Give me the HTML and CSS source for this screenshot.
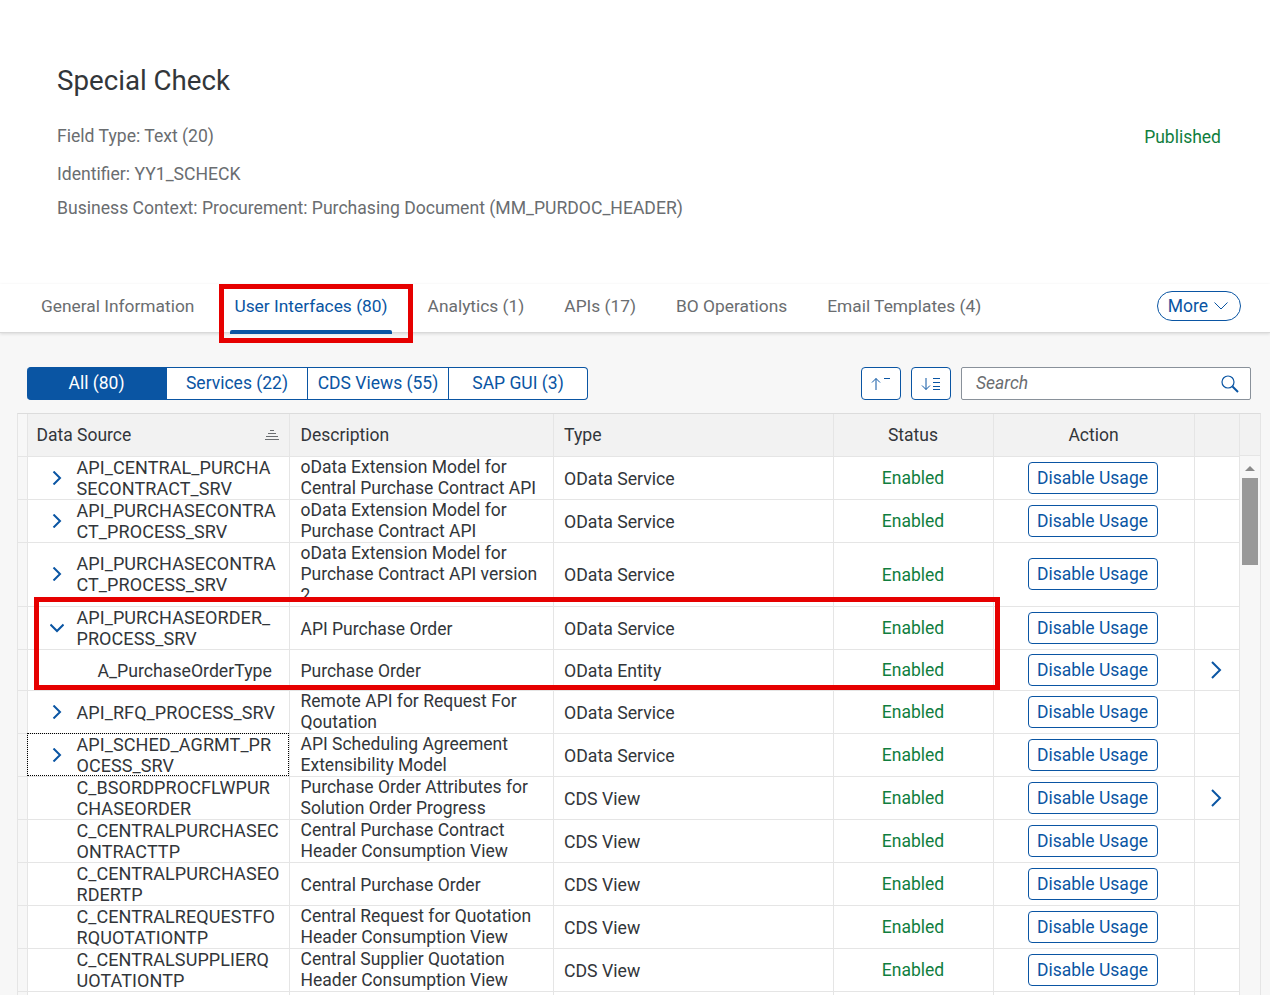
FILE: index.html
```html
<!DOCTYPE html>
<html lang="en">
<head>
    <meta charset="UTF-8">
    <title>Special Check</title>
    <link rel="stylesheet" href="styles.css">
</head>
<body>
    <header class="header">
        <h1>Special Check</h1>
        <div class="header-info">
            <div>
                <p class="meta meta-first">Field Type: Text (20)</p>
                <p class="meta">Identifier: YY1_SCHECK</p>
                <p class="meta">Business Context: Procurement: Purchasing Document (MM_PURDOC_HEADER)</p>
            </div>
            <span class="published">Published</span>
        </div>
    </header>

    <nav class="tabs">
        <a class="tab">General Information</a>
        <a class="tab tab-active">User Interfaces (80)</a>
        <a class="tab">Analytics (1)</a>
        <a class="tab">APIs (17)</a>
        <a class="tab">BO Operations</a>
        <a class="tab">Email Templates (4)</a>
        <button class="more">More
            <svg width="14" height="8" viewBox="0 0 14 8"><path d="M.5.5 7 7 13.500.5" fill="none" stroke="#0a55a3"/></svg>
        </button>
    </nav>

    <main class="content">
        <div class="toolbar">
            <div class="segments">
                <button class="segment segment-on seg-all">All (80)</button>
                <button class="segment seg-services">Services (22)</button>
                <button class="segment seg-cds">CDS Views (55)</button>
                <button class="segment seg-gui">SAP GUI (3)</button>
            </div>
            <div class="tools">
                <button class="tool">
                    <svg width="20" height="14" viewBox="0 0 20 14"><path d="M5 13V1.500M1 5.500l4-4 4 4M13 1.500h6" fill="none" stroke="#0a55a3"/></svg>
                </button>
                <button class="tool">
                    <svg width="20" height="14" viewBox="0 0 20 14"><path d="M5 1v11.500M1 8.500l4 4 4-4M12 1.500h7M12 5.500h7M12 9.500h7M12 12.500h7" fill="none" stroke="#0a55a3"/></svg>
                </button>
                <div class="search">
                    <span class="search-text">Search</span>
                    <svg width="20" height="20" viewBox="0 0 20 20"><circle cx="8" cy="8" r="6" fill="none" stroke="#0a55a3" stroke-width="1.200"/><path d="m12.500 12.500 5.500 5.500" stroke="#0a55a3" stroke-width="2"/></svg>
                </div>
            </div>
        </div>

        <div class="table-wrap">
            <table class="grid">
                <colgroup>
                    <col class="c-sel"><col class="c-source"><col class="c-desc"><col class="c-type">
                    <col class="c-status"><col class="c-action"><col class="c-nav">
                </colgroup>
                <thead>
                    <tr>
                        <th></th>
                        <th class="source-head">Data Source
                            <svg class="sort" width="14" height="10" viewBox="0 0 14 10"><path d="M5 .5h4M3 3.500h8M1 6.500h12M0 9.500h14" stroke="#6a6d70" fill="none"/></svg>
                        </th>
                        <th>Description</th>
                        <th class="type">Type</th>
                        <th class="center">Status</th>
                        <th class="center">Action</th>
                        <th></th>
                    </tr>
                </thead>
                <tbody>
                    <tr>
                        <td></td>
                        <td class="cell-source"><div class="source"><svg class="arrow" width="10" height="14" viewBox="0 0 10 14"><path d="m1.500.5 6.500 6.500-6.500 6.500" /></svg><span>API_CENTRAL_PURCHA<br>SECONTRACT_SRV</span></div></td>
                        <td>oData Extension Model for<br>Central Purchase Contract API</td>
                        <td class="type">OData Service</td>
                        <td class="center enabled">Enabled</td>
                        <td class="center cell-action"><button class="action">Disable Usage</button></td>
                        <td></td>
                    </tr>
                    <tr>
                        <td></td>
                        <td class="cell-source"><div class="source"><svg class="arrow" width="10" height="14" viewBox="0 0 10 14"><path d="m1.500.5 6.500 6.500-6.500 6.500" /></svg><span>API_PURCHASECONTRA<br>CT_PROCESS_SRV</span></div></td>
                        <td>oData Extension Model for<br>Purchase Contract API</td>
                        <td class="type">OData Service</td>
                        <td class="center enabled">Enabled</td>
                        <td class="center cell-action"><button class="action">Disable Usage</button></td>
                        <td></td>
                    </tr>
                    <tr class="row-tall">
                        <td></td>
                        <td class="cell-source"><div class="source"><svg class="arrow" width="10" height="14" viewBox="0 0 10 14"><path d="m1.500.5 6.500 6.500-6.500 6.500" /></svg><span>API_PURCHASECONTRA<br>CT_PROCESS_SRV</span></div></td>
                        <td>oData Extension Model for<br>Purchase Contract API version<br>2</td>
                        <td class="type">OData Service</td>
                        <td class="center enabled">Enabled</td>
                        <td class="center cell-action"><button class="action">Disable Usage</button></td>
                        <td></td>
                    </tr>
                    <tr>
                        <td></td>
                        <td class="cell-source"><div class="source source-open"><svg class="arrow" width="14" height="10" viewBox="0 0 14 10"><path d="m.5 1.500 6.500 6.500 6.500-6.500" /></svg><span>API_PURCHASEORDER_<br>PROCESS_SRV</span></div></td>
                        <td class="single">API Purchase Order</td>
                        <td class="type">OData Service</td>
                        <td class="center enabled">Enabled</td>
                        <td class="center cell-action"><button class="action">Disable Usage</button></td>
                        <td></td>
                    </tr>
                    <tr class="row-child">
                        <td></td>
                        <td class="cell-source single"><div class="source source-child"><span>A_PurchaseOrderType</span></div></td>
                        <td class="single">Purchase Order</td>
                        <td class="type">OData Entity</td>
                        <td class="center enabled">Enabled</td>
                        <td class="center cell-action"><button class="action">Disable Usage</button></td>
                        <td class="center"><svg class="arrow nav" width="12" height="18" viewBox="0 0 12 18"><path d="m2 1 8 8-8 8" /></svg></td>
                    </tr>
                    <tr>
                        <td></td>
                        <td class="cell-source"><div class="source"><svg class="arrow" width="10" height="14" viewBox="0 0 10 14"><path d="m1.500.5 6.500 6.500-6.500 6.500" /></svg><span class="single-text">API_RFQ_PROCESS_SRV</span></div></td>
                        <td>Remote API for Request For<br>Qoutation</td>
                        <td class="type">OData Service</td>
                        <td class="center enabled">Enabled</td>
                        <td class="center cell-action"><button class="action">Disable Usage</button></td>
                        <td></td>
                    </tr>
                    <tr>
                        <td></td>
                        <td class="cell-source focused"><div class="source"><svg class="arrow" width="10" height="14" viewBox="0 0 10 14"><path d="m1.500.5 6.500 6.500-6.500 6.500" /></svg><span>API_SCHED_AGRMT_PR<br>OCESS_SRV</span></div></td>
                        <td>API Scheduling Agreement<br>Extensibility Model</td>
                        <td class="type">OData Service</td>
                        <td class="center enabled">Enabled</td>
                        <td class="center cell-action"><button class="action">Disable Usage</button></td>
                        <td></td>
                    </tr>
                    <tr>
                        <td></td>
                        <td class="cell-source"><div class="source source-plain"><span>C_BSORDPROCFLWPUR<br>CHASEORDER</span></div></td>
                        <td>Purchase Order Attributes for<br>Solution Order Progress</td>
                        <td class="type">CDS View</td>
                        <td class="center enabled">Enabled</td>
                        <td class="center cell-action"><button class="action">Disable Usage</button></td>
                        <td class="center"><svg class="arrow nav" width="12" height="18" viewBox="0 0 12 18"><path d="m2 1 8 8-8 8" /></svg></td>
                    </tr>
                    <tr>
                        <td></td>
                        <td class="cell-source"><div class="source source-plain"><span>C_CENTRALPURCHASEC<br>ONTRACTTP</span></div></td>
                        <td>Central Purchase Contract<br>Header Consumption View</td>
                        <td class="type">CDS View</td>
                        <td class="center enabled">Enabled</td>
                        <td class="center cell-action"><button class="action">Disable Usage</button></td>
                        <td></td>
                    </tr>
                    <tr>
                        <td></td>
                        <td class="cell-source"><div class="source source-plain"><span>C_CENTRALPURCHASEO<br>RDERTP</span></div></td>
                        <td class="single">Central Purchase Order</td>
                        <td class="type">CDS View</td>
                        <td class="center enabled">Enabled</td>
                        <td class="center cell-action"><button class="action">Disable Usage</button></td>
                        <td></td>
                    </tr>
                    <tr>
                        <td></td>
                        <td class="cell-source"><div class="source source-plain"><span>C_CENTRALREQUESTFO<br>RQUOTATIONTP</span></div></td>
                        <td>Central Request for Quotation<br>Header Consumption View</td>
                        <td class="type">CDS View</td>
                        <td class="center enabled">Enabled</td>
                        <td class="center cell-action"><button class="action">Disable Usage</button></td>
                        <td></td>
                    </tr>
                    <tr>
                        <td></td>
                        <td class="cell-source"><div class="source source-plain"><span>C_CENTRALSUPPLIERQ<br>UOTATIONTP</span></div></td>
                        <td>Central Supplier Quotation<br>Header Consumption View</td>
                        <td class="type">CDS View</td>
                        <td class="center enabled">Enabled</td>
                        <td class="center cell-action"><button class="action">Disable Usage</button></td>
                        <td></td>
                    </tr>
                    <tr>
                        <td></td><td></td><td></td><td></td><td></td><td></td><td></td>
                    </tr>
                </tbody>
            </table>
            <div class="scroll-col">
                <div class="scroll-head"></div>
                <div class="scroll-track">
                    <div class="scroll-up"></div>
                    <div class="scroll-thumb"></div>
                </div>
            </div>
        </div>
    </main>

    <!-- red callouts drawn on top of the screenshot -->
    <div class="callout callout-tab"></div>
    <div class="callout callout-rows"></div>
</body>
</html>
```

FILE: styles.css
```css
* { box-sizing: border-box; }
html, body { height: 995px; overflow: hidden; }
body { margin: 0; font-family: Roboto, "Noto Sans", sans-serif; font-size: 17.5px; color: #32363a; background-color: #fff; position: relative; }
button { font-family: inherit; cursor: pointer; background-color: #fff; color: #0a55a3; }

.header { height: 284px; padding: 63px 49px 0 57px; }
h1 { margin: 0; font-size: 27.7px; line-height: 36px; font-weight: 400; color: #32363a; }
.header-info { display: flex; justify-content: space-between; align-items: flex-start; }
.meta { margin: 0 0 12px; line-height: 22px; font-size: 17.6px; color: #6a6d70; }
.meta-first { margin-top: 26px; margin-bottom: 16px; }
.published { margin-top: 28px; color: #107e3e; }

.tabs { height: 49px; display: flex; align-items: flex-start; gap: 40px; padding: 0 29px 0 41px; border-bottom: 1px solid #d9d9d9; box-shadow: 0 1px 3px rgba(0,0,0,0.12); position: relative; }
.tab { padding-top: 10px; height: 49px; line-height: 24px; font-size: 17.35px; color: #6a6d70; position: relative; }
.tab-active { color: #0a55a3; }
.tab-active::after { content: ""; position: absolute; left: -4px; right: -4px; bottom: -1px; height: 4px; border-radius: 2px 2px 0 0; background-color: #0a55a3; }
.more { margin-left: auto; margin-top: 7px; height: 30px; width: 84px; padding: 0 2px 0 0; border: 1px solid #0a55a3; border-radius: 15px; font-size: 17.5px; display: flex; align-items: center; justify-content: center; gap: 6px; }

.content { height: 662px; background-color: #f7f7f7; padding: 34px 9px 0 17px; }
.toolbar { display: flex; justify-content: space-between; height: 33px; padding: 0 10px; }
.segments { display: flex; }
.segment { height: 33px; padding: 0 0 2px; border: 1px solid #0a55a3; border-left: 0; font-size: 17.5px; }
.seg-all { width: 140px; border-radius: 4px 0 0 4px; }
.seg-services { width: 141px; }
.seg-cds { width: 141px; }
.seg-gui { width: 139px; border-radius: 0 4px 4px 0; }
.segment-on { background-color: #0a55a3; color: #fff; }
.tools { display: flex; gap: 10px; }
.tool { width: 40px; height: 33px; padding: 0; border: 1px solid #0a55a3; border-radius: 4px; display: flex; align-items: center; justify-content: center; }
.search { width: 290px; height: 33px; padding: 0 10px 0 14px; background-color: #fff; border: 1px solid #89919a; border-radius: 2px; display: flex; align-items: center; justify-content: space-between; }
.search-text { font-style: italic; color: #6a6d70; margin-bottom: 2px; }

.table-wrap { display: flex; align-items: flex-start; margin-top: 13px; border-top: 1px solid #dcdcdc; border-right: 1px solid #e5e5e5; border-left: 1px solid #e5e5e5; }
.grid { width: 1221px; table-layout: fixed; border-collapse: collapse; background-color: #fff; }
.c-sel { width: 9px; }
.c-source { width: 262px; }
.c-desc { width: 264px; }
.c-type { width: 280px; }
.c-status { width: 160px; }
.c-action { width: 201px; }
.c-nav { width: 45px; }
.grid th { height: 42px; padding: 1px 10px 0 11px; font-weight: 400; text-align: left; background-color: #f2f2f2; border: 1px solid #e5e5e5; border-top: 0; }
.grid td { height: 43px; padding: 0 0 0 11px; line-height: 21px; border: 1px solid #e5e5e5; overflow: hidden; }
.grid td:first-child, .grid th:first-child { background-color: #f7f7f7; padding: 0; border-left: 0; }
.grid .center { padding: 0; text-align: center; }
.grid td.enabled { padding-top: 2px; }
.grid td.cell-action { padding: 0 2px 0 0; }
.grid td.single { padding-top: 3px; }
.grid .type { padding-left: 10.5px; font-size: 17.7px; }
.grid td.type { padding-top: 3px; }
.grid .row-tall td { height: 64px; }
.grid .row-child td { height: 41px; }
.grid .source-head { padding-left: 9px; position: relative; }
.sort { position: absolute; right: 10px; top: 16px; }
.grid .cell-source { padding-left: 9px; font-size: 18px; letter-spacing: 0.08px; }
.source { display: flex; align-items: center; gap: 15px; padding-left: 15px; }
.source-open { gap: 13px; padding-left: 13px; }
.source-plain { padding-left: 40px; }
.source-child { padding-left: 61px; font-size: 17.7px; letter-spacing: 0; }
.single-text { padding-top: 2px; }
.arrow { flex: none; fill: none; stroke: #0a55a3; stroke-width: 2; }
.arrow.nav { display: block; margin: 0 auto; position: relative; left: -1px; }
.grid .focused { outline: 1px dotted #000; outline-offset: -1px; }
.enabled { color: #107e3e; }
.action { display: block; margin: 0 auto; width: 130px; height: 32px; padding: 0; border: 1px solid #0a55a3; border-radius: 4px; font-size: 17.5px; }

.scroll-col { width: 22px; }
.scroll-head { height: 42px; background-color: #f2f2f2; border-bottom: 1px solid #e5e5e5; }
.scroll-track { height: 600px; background-color: #f7f7f7; padding: 10px 2px 0; }
.scroll-up { width: 0; height: 0; margin: 0 auto 7px; border-left: 5px solid transparent; border-right: 5px solid transparent; border-bottom: 5px solid #8a8a8a; }
.scroll-thumb { height: 87px; background-color: #999; }

.callout { position: absolute; border: 5px solid #e60000; pointer-events: none; }
.callout-tab { left: 219px; top: 284px; width: 194px; height: 59px; }
.callout-rows { left: 34px; top: 597px; width: 966px; height: 93px; }
```
